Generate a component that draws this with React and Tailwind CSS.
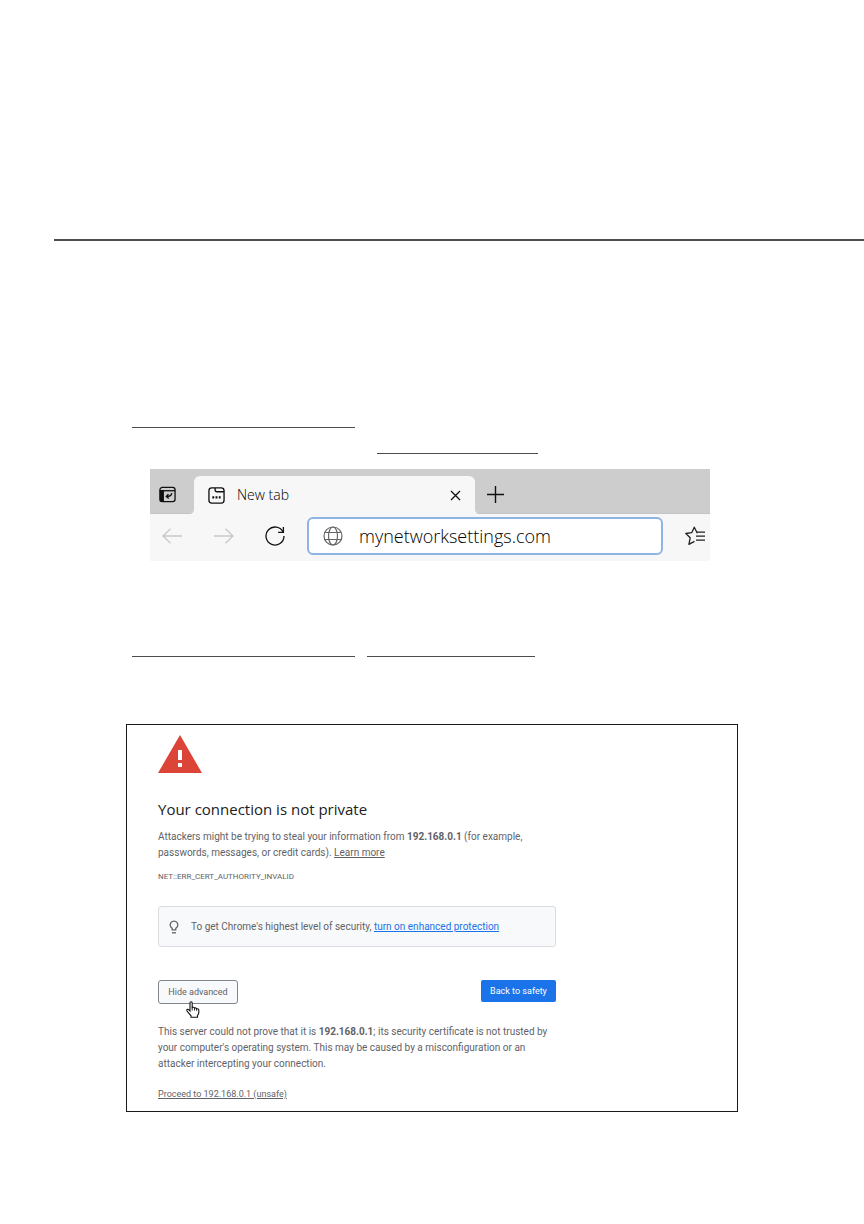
import React from 'react';

const TabActionsIcon = () => (
  <svg className="h-[17px] w-[17px]" viewBox="0 0 18 18" fill="none" stroke="#111" strokeWidth="1.4">
    <rect x="1" y="1.5" width="16" height="15" rx="2.5" />
    <path d="M1 5h16" />
    <path d="M1.5 5h3v11h-3z" fill="#111" />
    <path d="M13.5 7.500q-.3 3.500-5.500 3.500M10 8.600L7.700 11l2.600 2.200" />
  </svg>
);

const NewTabIcon = () => (
  <svg className="h-[17px] w-[17px]" viewBox="0 0 18 18" fill="none" stroke="#111" strokeWidth="1.4">
    <rect x="1" y="1" width="16" height="16" rx="3" />
    <path d="M7.5 1v2q0 2 2 2H17" />
    <path d="M4.6 11h2M8 11h2M11.4 11h2" strokeWidth="2.2" />
  </svg>
);

const CloseIcon = () => (
  <svg className="h-[11px] w-[11px]" viewBox="0 0 11 11" stroke="#111" strokeWidth="1.3">
    <path d="M1 1l9 9M10 1l-9 9" />
  </svg>
);

const PlusIcon = () => (
  <svg className="h-[17px] w-[17px]" viewBox="0 0 17 17" stroke="#111" strokeWidth="1.4">
    <path d="M8.5 0v17M0 8.5h17" />
  </svg>
);

const ArrowIcon = ({ className = '' }) => (
  <svg className={`h-4 w-5 ${className}`} viewBox="0 0 20 16" fill="none" stroke="#c9c9c9" strokeWidth="1.3">
    <path d="M20 8H1M8.500 .8L1 8l7.500 7.200" />
  </svg>
);

const ReloadIcon = () => (
  <svg className="h-5 w-5" viewBox="0 0 20 20" fill="none" stroke="#111" strokeWidth="1.3">
    <path d="M18.200 6.300A9 9 0 1 0 19 10" />
    <path d="M18.400 1v5.300h-5.300" />
  </svg>
);

const GlobeIcon = () => (
  <svg className="h-5 w-5 shrink-0" viewBox="0 0 20 20" fill="none" stroke="#666" strokeWidth="1.2">
    <circle cx="10" cy="10" r="9" />
    <ellipse cx="10" cy="10" rx="4.500" ry="9" />
    <path d="M1.800 6.500h16.400M1.800 13.500h16.400" />
  </svg>
);

const FavoritesIcon = () => (
  <svg className="h-5 w-5" viewBox="0 0 20 20" fill="none" stroke="#222" strokeWidth="1.3">
    <path d="M12.300 7.200L9.300 1.200 6.700 6.700 .8 7.500l4.400 4.300-1.300 6.600 5.600-3" strokeLinejoin="round" />
    <path d="M12 6.200h8M11 10.200h9M11 14.200h9" />
  </svg>
);

const WarningIcon = () => (
  <svg className="h-[38px] w-11" viewBox="0 0 44 38">
    <path d="M22 0l22 38H0z" fill="#db4437" />
    <path d="M20 15h4v10h-4zM20 28h4v4h-4z" fill="#fff" />
  </svg>
);

const BulbIcon = () => (
  <svg className="h-[14px] w-[10px] shrink-0" viewBox="0 0 10 14" fill="none" stroke="#5f6368" strokeWidth="1.300">
    <path d="M3.200 9.800V8.200a3.800 3.800 0 1 1 3.600 0v1.600z" />
    <path d="M3 12.800h4" />
  </svg>
);

const HandCursor = () => (
  <svg className="absolute left-7 top-[21px] h-[17px] w-[14px]" viewBox="0 0 14 17">
    <path
      d="M4 10V2q0-1.300 1.100-1.300T6.200 2v4.500q1.900-.8 2.300.5 1.800-.5 2.100.8 2.200-.4 2.200 1.500v2.200q0 1.500-1.300 3v1.800H5v-1.500L1 10q-.6-1.400.6-1.700Q2.500 8.200 4 10z"
      fill="#fff"
      stroke="#111"
      strokeWidth="1.100"
    />
    <path d="M6.200 6.500v3M8.500 7v2.500M10.600 7.800v2" stroke="#111" strokeWidth=".9" />
  </svg>
);

// Outward curve where the active tab meets the toolbar
const TabFoot = ({ className }) => (
  <svg className={`absolute bottom-0 h-[5px] w-[5px] ${className}`} viewBox="0 0 5 5">
    <path d="M5 0v5H0q5 0 5-5z" fill="#f7f7f7" />
  </svg>
);

const BrowserBar = () => (
  <div className="ml-[18px] mr-[154px] mt-[15px] overflow-hidden bg-[#f7f7f7] text-black">
    <div className="flex h-[45px] items-end border-b border-[#c4c4c4] bg-[#cdcdcd]">
      <button aria-label="Tab actions" className="flex h-[38px] w-11 items-center pl-[9px]">
        <TabActionsIcon />
      </button>
      <div className="relative -mb-px flex h-[38px] w-[281px] items-center rounded-t-md bg-[#f7f7f7] px-[14px]">
        <TabFoot className="-left-[5px]" />
        <NewTabIcon />
        <span className="ml-3 flex-1 text-sm font-light">New tab</span>
        <button aria-label="Close tab">
          <CloseIcon />
        </button>
        <TabFoot className="-right-[5px] -scale-x-100" />
      </div>
      <button aria-label="New tab" className="flex h-[38px] items-center pl-3">
        <PlusIcon />
      </button>
    </div>
    <div className="flex h-[47px] items-center pb-[3px] pl-3 pr-[5px]">
      <button aria-label="Back">
        <ArrowIcon />
      </button>
      <button aria-label="Forward" className="ml-8">
        <ArrowIcon className="-scale-x-100" />
      </button>
      <button aria-label="Reload" className="ml-[31px]">
        <ReloadIcon />
      </button>
      <label className="ml-[22px] flex h-[38px] flex-1 items-center rounded-md border-2 border-[#8fb3e3] bg-white pl-[14px]">
        <GlobeIcon />
        <input
          type="text"
          aria-label="Address"
          defaultValue="mynetworksettings.com"
          className="ml-4 w-full min-w-0 bg-transparent text-lg font-light outline-none"
        />
      </label>
      <button aria-label="Favorites" className="ml-[22px]">
        <FavoritesIcon />
      </button>
    </div>
  </div>
);

const PrivacyWarning = () => (
  <section className="ml-[126px] mr-[126px] border border-[#1a1a1a] pb-[9px] pl-[31px] pr-[181px] pt-[10px] font-['Roboto','Noto_Sans',sans-serif] text-[10px] leading-4 text-[#5f6368]">
    <WarningIcon />
    <h1 className="mt-6 font-['Open_Sans','Noto_Sans',sans-serif] text-[15px] leading-6 text-[#202124]">
      Your connection is not private
    </h1>
    <p className="mt-2">
      Attackers might be trying to steal your information from <b>192.168.0.1</b> (for example,
      <br />
      passwords, messages, or credit cards).{' '}
      <a href="#learn" className="underline">Learn more</a>
    </p>
    <p className="mt-2 text-[8px]">NET::ERR_CERT_AUTHORITY_INVALID</p>
    <div className="mt-[21px] flex h-[41px] items-center rounded-[3px] border border-[#dadce0] bg-[#f8f9fa] pl-[10px]">
      <BulbIcon />
      <p className="ml-3">
        To get Chrome's highest level of security,{' '}
        <a href="#protection" className="text-[#1a73e8] underline">turn on enhanced protection</a>
      </p>
    </div>
    <div className="mt-[33px] flex items-start justify-between">
      <div className="relative">
        <button className="block h-6 w-20 rounded-[3px] border border-[#80868b] bg-[#f8f9fa] text-[9px]">Hide advanced</button>
        <HandCursor />
      </div>
      <button className="h-[22px] w-[75px] rounded-[2px] bg-[#1a73e8] text-[9px] text-white">
        Back to safety
      </button>
    </div>
    <p className="mt-5">
      This server could not prove that it is <b>192.168.0.1</b>; its security certificate is not trusted by
      <br />
      your computer's operating system. This may be caused by a misconfiguration or an
      <br />
      attacker intercepting your connection.
    </p>
    <p className="mt-[14px] text-[9px]">
      <a href="#proceed" className="underline">Proceed to 192.168.0.1 (unsafe)</a>
    </p>
  </section>
);

export default function App() {
  return (
    <main className="min-h-screen bg-white pt-[239px] font-['Open_Sans','Noto_Sans',sans-serif]">
      <hr className="ml-[54px] h-[2px] border-0 bg-[#4d4b4c]" />
      <div className="pl-[132px] pt-[186px]">
        <hr className="w-[223px] border-[#4d4b4c]" />
        <hr className="ml-[245px] mt-[25px] w-[161px] border-[#4d4b4c]" />
        <BrowserBar />
        <div className="mt-[95px] flex gap-3">
          <hr className="w-[223px] border-[#4d4b4c]" />
          <hr className="w-[168px] border-[#4d4b4c]" />
        </div>
      </div>
      <div className="pt-[67px]">
        <PrivacyWarning />
      </div>
    </main>
  );
}
